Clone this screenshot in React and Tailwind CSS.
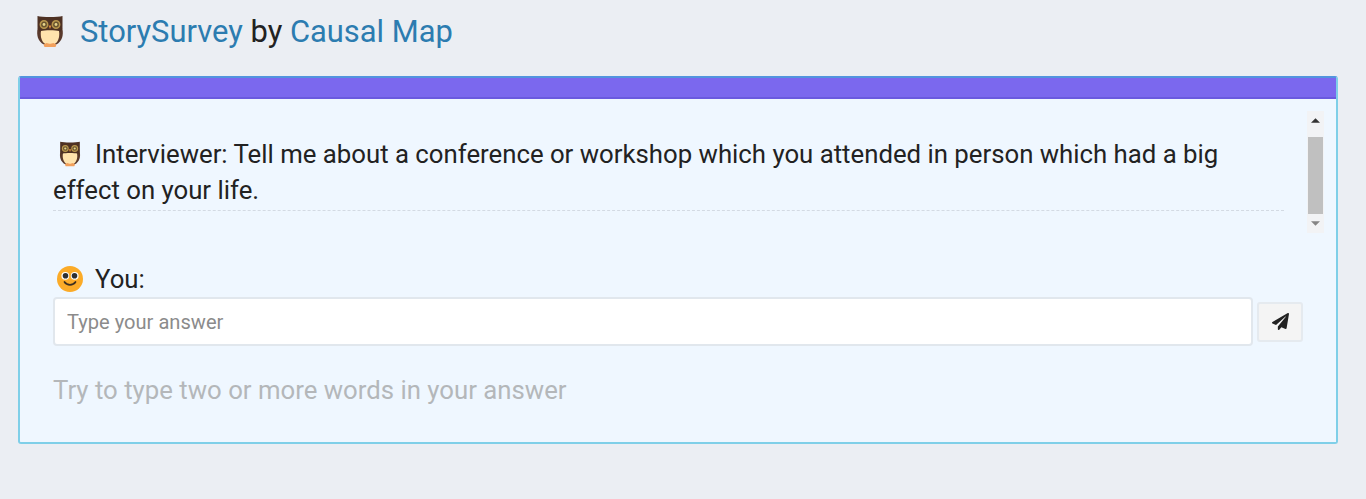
import { FaPaperPlane } from 'react-icons/fa'

const question =
  'Interviewer: Tell me about a conference or workshop which you attended in person which had a big effect on your life.'

function Owl({ className }) {
  return (
    <svg viewBox="0 0 28 32" className={className} aria-hidden="true">
      <path d="M2.5 10C0 17 1 24 6 28l4 2h8l4-2c5-4 6-11 3.5-18z" fill="#59392b" />
      <path d="M1.5 0.5C6 1.8 22 1.8 26.5 0.5V11c0 5-3 6-6 6H8c-3 0-6.5-1-6.5-6z" fill="#4e3123" />
      <path d="M5 15.5c3-1 15-1 18 0 1 6-1 11.5-5 13.5h-8c-4-2-6-7.5-5-13.5z" fill="#ffe3ad" />
      <path d="M7.5 29l3-1.5 3 .8h1l3-.8 3 1.5-1 2.5h-11z" fill="#f2a05c" />
      <circle cx="8" cy="9" r="3.7" fill="#6b5530" stroke="#b8964c" strokeWidth="1.5" />
      <circle cx="20" cy="9" r="3.7" fill="#6b5530" stroke="#b8964c" strokeWidth="1.5" />
      <circle cx="8" cy="9" r="1.4" fill="#e8d58a" />
      <circle cx="20" cy="9" r="1.4" fill="#e8d58a" />
      <path d="M12.5 10h3L14 13.5z" fill="#d98c3f" />
    </svg>
  )
}

function Smiley({ className }) {
  return (
    <svg viewBox="0 0 26 26" className={className} aria-hidden="true">
      <circle cx="13" cy="13" r="13" fill="#fbab28" />
      <circle cx="8.3" cy="9.8" r="3.9" fill="#fff" />
      <circle cx="17.7" cy="9.8" r="3.9" fill="#fff" />
      <circle cx="8.5" cy="9.8" r="2.8" fill="#2c2f33" />
      <circle cx="17.5" cy="9.8" r="2.8" fill="#2c2f33" />
      <path d="M7.5 16c2.5 3.7 8.5 3.7 11 0" fill="none" stroke="#3c2f20" strokeWidth="1.7" strokeLinecap="round" />
    </svg>
  )
}

function Scrollbar() {
  return (
    <div className="flex h-[122px] w-[17px] flex-col items-center bg-[#f2f3f5]">
      <svg viewBox="0 0 10 5" className="mt-[7px] h-[5px] w-[9px]">
        <path d="M0 5L5 0l5 5z" fill="#333" />
      </svg>
      <div className="mt-[14px] h-[77px] w-[15px] bg-[#c0c0c0]" />
      <svg viewBox="0 0 10 5" className="mt-[7px] h-[5px] w-[9px]">
        <path d="M0 0l5 5 5-5z" fill="#858585" />
      </svg>
    </div>
  )
}

export default function App() {
  return (
    <div className="h-[499px] w-[1366px] overflow-hidden bg-[#ebeef3] pl-[18px] font-['Roboto',sans-serif] text-[#222]">
      <header className="flex h-[76px] items-start pl-[18px] pt-[14px]">
        <Owl className="mt-[1px] h-[33px] w-[28px]" />
        <h1 className="ml-[16px] whitespace-nowrap text-[30.9px] leading-[36px]">
          <a className="text-[#2c7cb0]">StorySurvey</a> by <a className="text-[#2c7cb0]">Causal Map</a>
        </h1>
      </header>

      <main className="h-[368px] w-[1320px] rounded-[3px] border-2 border-[#7fcfe8] border-t-[#5294de] bg-[#eff7ff]">
        <div className="h-[21px] border-b-2 border-[#6a5adf] bg-[#7b68ee]" />

        <div className="flex h-[134px] justify-between pl-[33px] pr-[12px] pt-[12px]">
          <div className="mt-[25px] h-[75px] w-[1231px] border-b border-dashed border-[#d3dae3]">
            <p className="text-[25.76px] leading-[36px]">
              <Owl className="mr-[14px] ml-[6px] inline h-[28px] w-[22px] align-[-5px]" />
              {question}
            </p>
          </div>
          <Scrollbar />
        </div>

        <div className="pl-[33px]">
          <label className="flex h-[64px] items-end text-[25.76px] leading-[36px]">
            <Smiley className="mr-[12px] mb-[5px] ml-[4px] h-[26px] w-[26px]" />
            You:
          </label>
          <div className="flex items-center gap-[4px]">
            <input
              className="h-[49px] w-[1200px] rounded-[4px] border-2 border-[#e1e7ed] bg-white px-[12px] text-[20.1px] placeholder:text-[#8b8b8b]"
              placeholder="Type your answer"
            />
            <button className="flex h-[40px] w-[46px] items-center justify-center rounded-[3px] border-2 border-[#e5eaef] bg-[#f4f4f4]">
              <FaPaperPlane className="h-[17px] w-[17px] text-[#222]" />
            </button>
          </div>
          <p className="mt-[26px] text-[25.76px] leading-[36px] text-[#b4b7ba]">
            Try to type two or more words in your answer
          </p>
        </div>
      </main>
    </div>
  )
}
